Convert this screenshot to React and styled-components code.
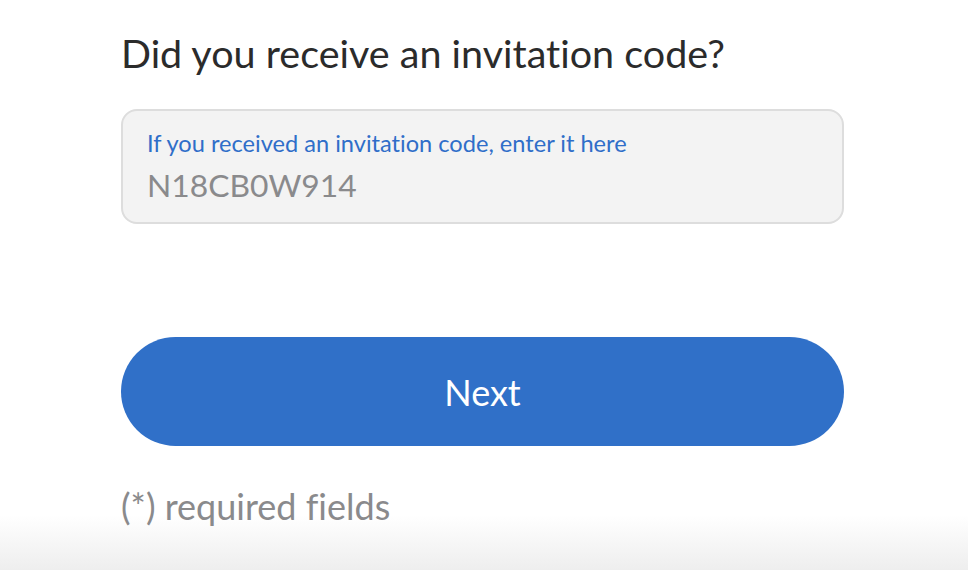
import React from "react";
import styled, { createGlobalStyle } from "styled-components";

const Global = createGlobalStyle`
  html, body { margin: 0; padding: 0; }
  body {
    font-family: Lato, "Open Sans", sans-serif;
    background: #fff;
    font-variant-ligatures: none;
  }
`;

const Page = styled.div`
  min-height: 570px;
  box-sizing: border-box;
  padding: 28px 124px 0 121px;
  background: linear-gradient(to bottom, #fff 0, #fff 515px, #eeeeee 570px);
`;

const Title = styled.h1`
  margin: 0;
  font-size: 39.5px;
  font-weight: 400;
  color: #2b2b2b;
  line-height: 50px;
`;

const Field = styled.div`
  margin-top: 31px;
  height: 115px;
  box-sizing: border-box;
  border: 2px solid #dddddd;
  border-radius: 16px;
  background: #f3f3f3;
  padding: 16px 24px 0 24px;
  display: flex;
  flex-direction: column;
`;

const Label = styled.label`
  font-size: 23.6px;
  color: #2f6ec9;
  line-height: 32px;
`;

const Value = styled.div`
  font-size: 31.8px;
  color: #8a8a8c;
  line-height: 40px;
  margin-top: 6px;
`;

const Button = styled.button`
  margin-top: 113px;
  width: 100%;
  height: 109px;
  border: none;
  border-radius: 55px;
  background: #3070c8;
  color: #fff;
  font-family: Lato, sans-serif;
  font-size: 36px;
  font-variant-ligatures: none;
  display: flex;
  align-items: center;
  justify-content: center;
`;

const Note = styled.p`
  margin: 38px 0 0;
  font-size: 36px;
  color: #8a8a8c;
  line-height: 44px;
`;

export default function App() {
  return (
    <>
      <Global />
      <Page>
        <Title>Did you receive an invitation code?</Title>
        <Field>
          <Label>If you received an invitation code, enter it here</Label>
          <Value>N18CB0W914</Value>
        </Field>
        <Button>Next</Button>
        <Note>(*) required fields</Note>
      </Page>
    </>
  );
}
